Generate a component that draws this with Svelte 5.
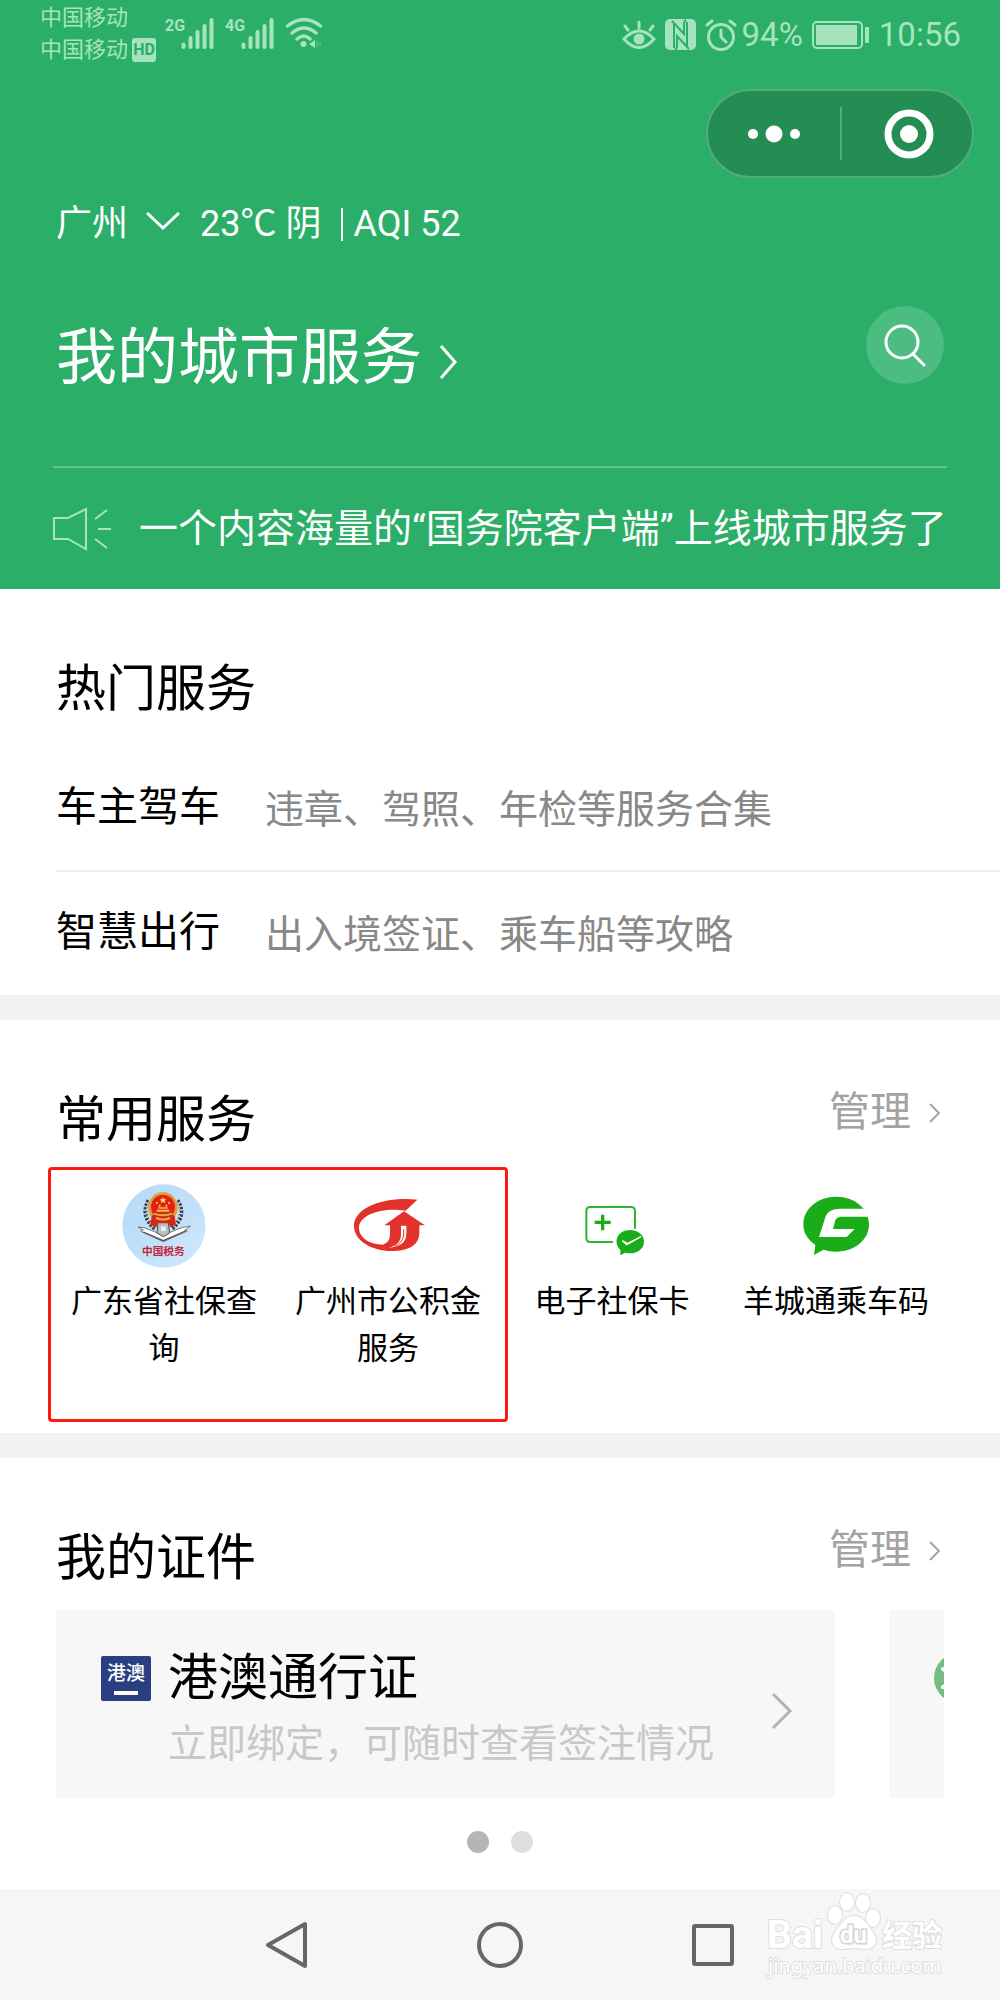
<script lang="ts">
  type Topic = { name: string; desc: string }
  type Service = { name: string; icon: 'tax' | 'fund' | 'card' | 'bus' }

  const topics: Topic[] = [
    { name: '车主驾车', desc: '违章、驾照、年检等服务合集' },
    { name: '智慧出行', desc: '出入境签证、乘车船等攻略' },
  ]

  const services: Service[] = [
    { name: '广东省社保查询', icon: 'tax' },
    { name: '广州市公积金服务', icon: 'fund' },
    { name: '电子社保卡', icon: 'card' },
    { name: '羊城通乘车码', icon: 'bus' },
  ]

  let slide = $state(0)
</script>

{#snippet signal(label: string)}
  <svg class="signal" width="50" height="32" viewBox="0 0 50 32">
    <text x="0" y="14">{label}</text>
    <g stroke="currentColor" stroke-width="4" stroke-linecap="round">
      <path d="M18.5 27.500v2.500M25.500 21v9M32.500 15v15M39.500 9v21M46.500 3v27" />
    </g>
  </svg>
{/snippet}

{#snippet manage()}
  <a class="manage" href="#manage">
    管理
    <svg width="12" height="22" viewBox="0 0 12 22" fill="none" stroke="currentColor" stroke-width="2">
      <path d="M1 2l9 9-9 9" />
    </svg>
  </a>
{/snippet}

<div class="page">
  <header>
    <div class="status">
      <div class="carriers">
        <span>中国移动</span>
        <span>中国移动 <b>HD</b></span>
      </div>
      {@render signal('2G')}
      {@render signal('4G')}
      <svg class="wifi" width="38" height="32" viewBox="0 0 38 32" fill="none" stroke="currentColor" stroke-width="3.500" stroke-linecap="round">
        <path d="M2.500 9Q19-4 35.500 9M7 16Q19 6 31 16M12 22Q19 16 25 22" />
        <circle cx="18.500" cy="27" r="3" fill="currentColor" stroke="none" />
        <path d="M24 27l6-4v8z" fill="currentColor" stroke="none" />
        <path d="M32 23v7M35 25v3" stroke-width="1" opacity=".5" />
      </svg>
      <div class="system">
        <svg width="34" height="32" viewBox="0 0 34 32" fill="none" stroke="currentColor" stroke-width="3" stroke-linecap="round">
          <path d="M2 20Q17 4 32 20Q17 37 2 20zM17 9V3M6 11L3 7M28 11l3-4" />
          <circle cx="17" cy="20" r="5.500" fill="currentColor" stroke="none" />
        </svg>
        <svg width="31" height="32" viewBox="0 0 31 32">
          <rect width="31" height="31" rx="5" fill="currentColor" />
          <path d="M7 2L19 15V5Q19 2 21 1M24 30L12 17V27Q12 30 10 31M9 5V29M22 3V27" fill="none" stroke="#2bae67" stroke-width="2" />
        </svg>
        <svg width="32" height="32" viewBox="0 0 32 32" fill="none" stroke="currentColor" stroke-width="3" stroke-linecap="round">
          <circle cx="16" cy="18" r="12.500" />
          <path d="M16 11v7l5 5M2 6l5-4M30 6l-5-4" />
        </svg>
        <span>94%</span>
        <svg class="battery" width="58" height="28" viewBox="0 0 58 28">
          <rect x="1" y="1" width="49" height="26" rx="4" fill="none" stroke="currentColor" stroke-width="2" />
          <rect x="4" y="4" width="41" height="20" fill="currentColor" />
          <rect x="53" y="6" width="4" height="16" rx="1" fill="currentColor" />
        </svg>
        <time>10:56</time>
      </div>
    </div>

    <div class="capsule">
      <button aria-label="更多">
        <svg width="54" height="18" viewBox="0 0 54 18" fill="currentColor">
          <circle cx="6" cy="9" r="5" /><circle cx="27" cy="9" r="8.500" /><circle cx="48" cy="9" r="5" />
        </svg>
      </button>
      <button aria-label="关闭">
        <svg width="50" height="50" viewBox="0 0 50 50">
          <circle cx="25" cy="25" r="21" fill="none" stroke="currentColor" stroke-width="7" />
          <circle cx="25" cy="25" r="9" fill="currentColor" />
        </svg>
      </button>
    </div>

    <div class="weather">
      <button class="city">
        广州
        <svg width="34" height="20" viewBox="0 0 34 20" fill="none" stroke="currentColor" stroke-width="3"><path d="M1 1l16 15L33 1" /></svg>
      </button>
      <span>23℃ 阴</span>
      <span class="aqi">AQI 52</span>
    </div>

    <div class="heading">
      <h1>
        <a href="#city">
          我的城市服务
          <svg width="20" height="34" viewBox="0 0 20 34" fill="none" stroke="currentColor" stroke-width="3"><path d="M3 1l14 16L3 33" /></svg>
        </a>
      </h1>
      <button class="search" aria-label="搜索">
        <svg width="44" height="44" viewBox="0 0 44 44" fill="none" stroke="currentColor" stroke-width="3" stroke-linecap="round">
          <circle cx="19" cy="19" r="16" /><path d="M30 31l11 11" />
        </svg>
      </button>
    </div>

    <a class="notice" href="#notice">
      <svg width="59" height="44" viewBox="0 0 59 44" fill="none" stroke="currentColor" stroke-width="2">
        <path d="M1 11h14L33 2v40L15 32H1zM42 12l12-9M45 22h13M42 32l12 9" />
      </svg>
      <span>一个内容海量的“国务院客户端”上线城市服务了</span>
    </a>
  </header>

  <section>
    <h2>热门服务</h2>
    <ul class="topics">
      {#each topics as topic}
        <li>
          <a href="#topic">
            <span class="name">{topic.name}</span>
            <span class="desc">{topic.desc}</span>
          </a>
        </li>
      {/each}
    </ul>
  </section>

  <section>
    <div class="section-head">
      <h2>常用服务</h2>
      {@render manage()}
    </div>
    <div class="services">
      {#each services as service}
        <a href="#service">
          {#if service.icon === 'tax'}
            <svg viewBox="66 69 252 252">
              <defs>
                <linearGradient id="sky" x1="0" y1="0" x2="1" y2="1">
                  <stop offset="0" stop-color="#b5d9f6" />
                  <stop offset=".6" stop-color="#c3e1fb" />
                  <stop offset="1" stop-color="#d5e9fb" />
                </linearGradient>
              </defs>
              <circle cx="192" cy="195" r="125" fill="url(#sky)" />
              <path d="M146 118Q120 165 166 204M232 118Q262 165 214 204" fill="none" stroke="#3d4240" stroke-width="13" stroke-dasharray="7 4" />
              <path d="M149 120Q126 165 168 201M229 120Q255 165 212 201" fill="none" stroke="#d8dcd6" stroke-width="4" stroke-dasharray="6 5" />
              <path d="M114 198l18 2 58 22 55-22 27-5-18 13 8 2-72 32-68-31 8-4z" fill="#fff" stroke="#777" stroke-width="3" />
              <path d="M130 213l60 26 66-29" fill="none" stroke="#555" stroke-width="4" />
              <path d="M174 184h31l4 32-19 11-19-11z" fill="#b9bfc2" stroke="#4b5054" stroke-width="3" />
              <path d="M183 196h14v14h-14z" fill="#eef" />
              <ellipse cx="189" cy="140" rx="44" ry="47" fill="#dfa03c" />
              <ellipse cx="189" cy="138" rx="36" ry="37" fill="#e41f17" />
              <path d="M155 165l-4 26 18 8 4-12h33l4 12 18-8-4-26-18-12h-34z" fill="#d4271c" />
              <path d="M161 158q28 10 56 0M168 171q21 9 42 0" fill="none" stroke="#e8ae45" stroke-width="6" />
              <path d="M170 146h38v6h-38zM175 139h28v4h-28z" fill="#f3bd4c" />
              <path d="M189 108l3 7h7l-5 5 2 7-7-4-7 4 2-7-5-5h7z" fill="#ffdf62" />
              <g fill="#ffdf62"><circle cx="171" cy="126" r="3" /><circle cx="207" cy="126" r="3" /><circle cx="179" cy="134" r="3" /><circle cx="199" cy="134" r="3" /></g>
              <text x="190" y="282" font-size="32" font-weight="700" text-anchor="middle" fill="#c4243b">中国税务</text>
            </svg>
          {:else if service.icon === 'fund'}
            <svg viewBox="738 69 252 252">
              <path d="M952 116C850 106 762 140 762 195C762 242 820 270 872 270C930 270 958 250 958 215V193H975L912 151L853 193H870V220Q870 244 849 251C812 250 777 232 777 200C777 160 850 138 917 149Z" fill="#e2322c" />
              <path d="M903 194H919V220C919 246 896 259 866 260C894 252 903 240 903 218Z" fill="#fff" />
              <path d="M911 204V222Q908 246 884 256" fill="none" stroke="#e2322c" stroke-width="3" />
            </svg>
          {:else if service.icon === 'card'}
            <svg viewBox="90 69 252 252">
              <path d="M219 243H151Q139 243 139 231V150Q139 138 151 138H273Q285 138 285 150V203" fill="none" stroke="#2eb135" stroke-width="6" />
              <path d="M188 161v47M164 184h48" stroke="#1aad19" stroke-width="10" />
              <path d="M270 207C294 207 312 222 312 242S294 277 270 277Q262 277 255 275L241 283V267C219 246 230 207 270 207Z" fill="#1aad19" />
              <path d="M247 239l13 12 43-24-41 21z" fill="#fff" stroke="#fff" stroke-width="4" />
            </svg>
          {:else}
            <svg viewBox="762 69 252 252">
              <path d="M889 107C944 107 987 143 987 190S944 272 889 272Q867 272 850 266L822 282L826 252C803 236 790 216 790 190C790 143 834 107 889 107Z" fill="#1aad19" />
              <path d="M970 143H901Q865 143 857 166L837 228H920L944 204H879L885 180Q889 168 903 167H990Z" fill="#fff" />
            </svg>
          {/if}
          <span>{service.name}</span>
        </a>
      {/each}
      <div class="highlight"></div>
    </div>
  </section>

  <section>
    <div class="section-head">
      <h2>我的证件</h2>
      {@render manage()}
    </div>
    <div class="cards">
      <a class="permit" href="#permit">
        <span class="badge">港澳</span>
        <div class="info">
          <h3>港澳通行证</h3>
          <p>立即绑定，可随时查看签注情况</p>
        </div>
        <svg class="arrow" width="22" height="38" viewBox="0 0 22 38" fill="none" stroke="#b2b2b2" stroke-width="3"><path d="M2 2l17 17L2 36" /></svg>
      </a>
      <a class="permit" href="#next" aria-label="证件">
        <svg class="round" width="50" height="50" viewBox="0 0 50 50">
          <circle cx="25" cy="25" r="25" fill="#72bd80" />
          <path d="M9 16l8 5M9 34l8-4M22 12h16v26H22z" stroke="#fff" stroke-width="4" fill="none" stroke-linecap="round" />
        </svg>
      </a>
    </div>
    <div class="dots">
      {#each [0, 1] as i}
        <button class:active={slide === i} aria-label={`第${i + 1}页`} onclick={() => (slide = i)}></button>
      {/each}
    </div>
  </section>

  <nav>
    <button aria-label="返回">
      <svg width="48" height="48" viewBox="0 0 48 48"><path d="M42 3v42L5 24z" /></svg>
    </button>
    <button aria-label="主页">
      <svg width="48" height="48" viewBox="0 0 48 48"><circle cx="24" cy="24" r="21" /></svg>
    </button>
    <button aria-label="最近任务">
      <svg width="48" height="48" viewBox="0 0 48 48"><rect x="5" y="5" width="38" height="38" rx="1" /></svg>
    </button>
    <svg class="watermark" width="188" height="94" viewBox="0 0 188 94">
      <g class="paw">
        <ellipse cx="75" cy="25" rx="7" ry="9" /><ellipse cx="87" cy="12" rx="7" ry="9" />
        <ellipse cx="103" cy="13" rx="7" ry="9" /><ellipse cx="113" cy="28" rx="7" ry="9" />
        <path d="M94 26c10 0 13 9 19 16 6 8 2 17-7 17-5 0-8-1-12-1s-7 1-12 1c-9 0-13-9-7-17 6-7 9-16 19-16z" />
      </g>
      <text x="7" y="58" font-size="39" font-weight="700">Bai</text>
      <text class="du" x="80" y="53" font-size="24" font-weight="700">du</text>
      <text x="122" y="56" font-size="30" font-weight="700">经验</text>
      <text class="site" x="8" y="83" font-size="20">jingyan.baidu.com</text>
    </svg>
  </nav>
</div>

<style>
  :global(body) {
    margin: 0;
    background: #fff;
  }
  .page {
    font-family: Roboto, 'Noto Sans CJK SC', sans-serif;
    color: #000;
  }
  a {
    color: inherit;
    text-decoration: none;
  }
  button {
    padding: 0;
    border: 0;
    background: none;
    color: inherit;
    font: inherit;
    cursor: pointer;
  }
  svg {
    display: block;
    flex: none;
  }
  h1, h2, h3, p, ul {
    margin: 0;
    padding: 0;
    font-weight: 400;
    list-style: none;
  }

  header {
    background: #2bae67;
    color: #fff;
  }
  .status {
    display: flex;
    align-items: flex-start;
    height: 68px;
    padding: 0 39px 0 40px;
    color: #a5e4bc;
    .carriers {
      display: grid;
      width: 125px;
      padding-top: 2px;
      font-size: 22px;
      line-height: 32px;
      white-space: nowrap;
    }
    .carriers span {
      display: flex;
      align-items: center;
      gap: 4px;
    }
    .carriers b {
      width: 24px;
      border-radius: 3px;
      background: #a5e4bc;
      color: #2bae67;
      font-size: 16px;
      line-height: 24px;
      text-align: center;
    }
    .signal {
      margin: 17px 10px 0 0;
    }
    .signal text {
      fill: currentColor;
      font-size: 16px;
      font-weight: 700;
    }
    .wifi {
      margin-top: 17px;
    }
  }
  .system {
    display: flex;
    align-items: center;
    gap: 9px;
    margin-left: auto;
    padding-top: 15px;
    font-size: 33px;
    line-height: 40px;
    span {
      margin-left: -4px;
    }
  }
  .capsule {
    display: grid;
    grid-template-columns: 1fr 1fr;
    box-sizing: border-box;
    width: 268px;
    height: 89px;
    margin: 21px 26px 0 auto;
    border: 2px solid #54ac79;
    border-radius: 45px;
    background: #238d53;
    button {
      display: grid;
      place-items: center;
    }
    button + button {
      padding-left: 6px;
      background: linear-gradient(#54ac79, #54ac79) left / 2px 53px no-repeat;
    }
  }
  .weather {
    display: flex;
    align-items: center;
    gap: 20px;
    padding: 24px 56px 0;
    font-size: 36px;
    line-height: 44px;
    .city {
      display: flex;
      align-items: center;
      gap: 18px;
    }
    .city svg {
      margin-bottom: 4px;
    }
    .aqi {
      display: flex;
      align-items: center;
      gap: 10px;
    }
    .aqi::before {
      content: '';
      width: 2px;
      height: 33px;
      background: #fff;
    }
  }
  .heading {
    display: flex;
    justify-content: space-between;
    margin: 0 53px;
    padding: 60px 3px 68px;
    border-bottom: 2px solid #62c48d;
    h1 {
      margin-top: 12px;
      font-size: 61px;
      line-height: 80px;
    }
    h1 a {
      display: flex;
      align-items: center;
      gap: 16px;
    }
    h1 svg {
      margin-top: 8px;
    }
  }
  .search {
    display: grid;
    place-items: center;
    width: 78px;
    height: 78px;
    border-radius: 50%;
    background: #4dbc80;
  }
  .notice {
    display: flex;
    align-items: center;
    gap: 27px;
    min-height: 121px;
    padding: 0 53px;
    font-size: 39px;
    line-height: 48px;
    svg {
      color: #a5e4bc;
    }
    span {
      white-space: nowrap;
    }
  }

  section {
    padding: 68px 56px 0;
  }
  section + section {
    border-top: 25px solid #f2f2f2;
  }
  h2 {
    font-size: 50px;
    line-height: 64px;
  }
  .topics {
    margin: 26px -56px 0 0;
    li + li {
      border-top: 2px solid #ededed;
    }
    a {
      display: flex;
      align-items: center;
      gap: 45px;
      height: 123px;
    }
    .name {
      padding-bottom: 4px;
      font-size: 41px;
      line-height: 48px;
    }
    .desc {
      padding-top: 2px;
      color: #888;
      font-size: 39px;
      line-height: 48px;
    }
  }
  .section-head {
    display: flex;
    justify-content: space-between;
    align-items: flex-start;
  }
  .manage {
    display: flex;
    align-items: center;
    gap: 18px;
    padding-right: 3px;
    color: #a3a3a3;
    font-size: 41px;
    line-height: 48px;
    svg {
      margin-top: 2px;
    }
  }
  .services {
    position: relative;
    display: grid;
    grid-template-columns: repeat(4, 1fr);
    margin: 32px -4px 0;
    padding-bottom: 61px;
    a {
      display: grid;
      justify-items: center;
      align-content: start;
      gap: 10px;
      padding: 0 16px;
      font-size: 31px;
      line-height: 47px;
      text-align: center;
    }
    svg {
      width: 84px;
      height: 84px;
    }
  }
  .highlight {
    position: absolute;
    inset: -17px calc(50% - 8px) 11px -4px;
    border: 3px solid #ff1a0d;
    border-radius: 4px;
    pointer-events: none;
  }
  .cards {
    display: flex;
    gap: 54px;
    margin-top: 20px;
    overflow: hidden;
  }
  .permit {
    display: flex;
    align-items: flex-start;
    flex: 0 0 calc(100% - 109px);
    box-sizing: border-box;
    min-height: 188px;
    padding: 36px 42px 28px 45px;
    border-radius: 4px;
    background: #f7f7f7;
    .arrow {
      align-self: center;
      margin-top: 6px;
    }
    .round {
      margin-top: 7px;
    }
    .badge {
      box-sizing: border-box;
      width: 50px;
      height: 45px;
      margin: 10px 17px 0 0;
      border-radius: 2px;
      background: linear-gradient(#fff, #fff) 50% 35px / 24px 4px no-repeat #2a3e82;
      color: #fff;
      font-size: 19px;
      font-weight: 500;
      line-height: 36px;
      text-align: center;
    }
    .info {
      flex: 1;
    }
    h3 {
      font-size: 50px;
      line-height: 64px;
    }
    p {
      margin-top: 10px;
      color: #c8c8c8;
      font-size: 39px;
      line-height: 48px;
    }
  }
  .dots {
    display: flex;
    justify-content: center;
    gap: 22px;
    padding: 33px 0 36px;
    button {
      width: 22px;
      height: 22px;
      border-radius: 50%;
      background: #dedede;
    }
    .active {
      background: #b5b5b5;
    }
  }
  nav {
    position: relative;
    display: flex;
    justify-content: center;
    align-items: center;
    gap: 165px;
    height: 111px;
    background: #f6f6f6;
    button svg {
      fill: none;
      stroke: #666;
      stroke-width: 4;
      stroke-linejoin: round;
    }
  }
  .watermark {
    position: absolute;
    right: 52px;
    bottom: 16px;
    fill: #fff;
    stroke: #dedede;
    stroke-width: 2;
    paint-order: stroke;
    .du {
      fill: #fff;
      stroke: #d4d4d4;
      stroke-width: 3;
    }
    .site {
      font-family: 'Noto Sans', sans-serif;
    }
  }
</style>
